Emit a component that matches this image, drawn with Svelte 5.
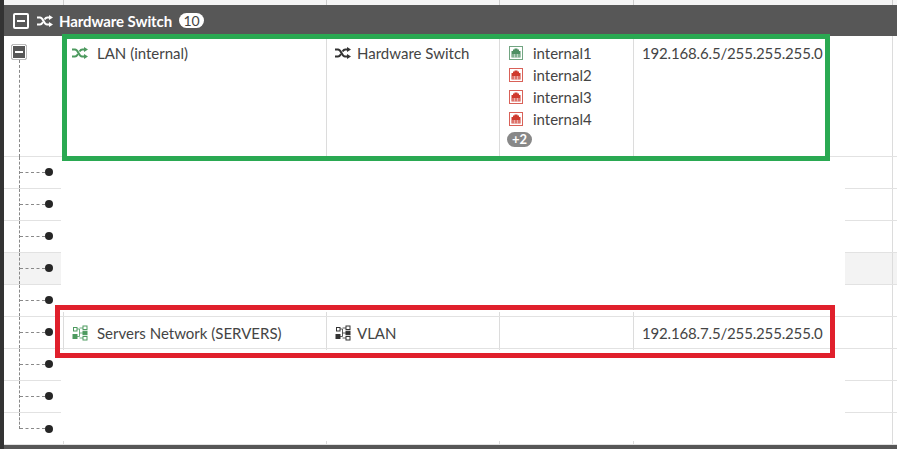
<script>
  // interface table, most rows are blanked out in the screenshot
  const ports = [
    { name: 'internal1', up: true },
    { name: 'internal2', up: false },
    { name: 'internal3', up: false },
    { name: 'internal4', up: false }
  ];
  const childRows = [
    { id: 1 }, { id: 2 }, { id: 3 }, { id: 4, hover: true }, { id: 5 },
    { id: 6, name: 'Servers Network (SERVERS)', type: 'VLAN', ip: '192.168.7.5/255.255.255.0' },
    { id: 7 }, { id: 8 }, { id: 9, last: true }
  ];
</script>

{#snippet shuffle()}
  <svg class="icon" viewBox="0 0 16 12" fill="none" stroke="currentColor" stroke-width="2">
    <path d="M0 2.500h3c3.500 0 3.500 7 7 7h2.500" />
    <path d="M0 9.500h3c1.500 0 2.300-1.200 3-2.500M7.500 4.500c.7-1.100 1.500-2 2.800-2h2.200" />
    <path d="M12 0v5l4-2.500zM12 7v5l4-2.500z" fill="currentColor" stroke="none" />
  </svg>
{/snippet}

{#snippet vlan()}
  <svg class="icon" viewBox="0 0 16 16" fill="none" stroke="currentColor" stroke-width="1">
    <rect x="1.500" y="2.500" width="3.500" height="3.500" />
    <rect x="1" y="9.500" width="4" height="4" fill="currentColor" />
    <rect x="11" y="1" width="4" height="3.500" />
    <rect x="11" y="6.200" width="4" height="3.500" fill="currentColor" />
    <rect x="11" y="11.500" width="4" height="3.500" />
    <path d="M5 4h2.500v7.500H5M7.500 8H11M7.500 3H11M7.500 13H11" stroke-width="0.800" />
  </svg>
{/snippet}

{#snippet port(up)}
  <svg class="port" class:up viewBox="0 0 14 14">
    <rect x="0.500" y="0.500" width="13" height="13" fill="#fff" stroke="currentColor" stroke-opacity="0.800" />
    <path d="M2.500 11.500V5H4V3.500h1.500V2.500h3v1H10V5h1.500v6.500z" fill="currentColor" />
    <path d="M4 8v3.500M5.500 8v3.500M7 8v3.500M8.500 8v3.500M10 8v3.500" stroke="#fff" stroke-width="0.600" />
  </svg>
{/snippet}

<div class="page">
  <div class="top-strip">
    <span></span><span></span><span></span><span></span><span></span><span></span>
  </div>

  <div class="group-head">
    <span class="toggle"></span>
    <span class="head-icon">{@render shuffle()}</span>
    <span class="group-name">Hardware Switch</span>
    <span class="count">10</span>
  </div>

  <div class="row first">
    <div class="tree root"><span class="toggle small"></span></div>
    <div class="cell name lead"><span class="green">{@render shuffle()}</span>LAN (internal)</div>
    <div class="cell name"><span class="dark">{@render shuffle()}</span>Hardware Switch</div>
    <div class="cell ports">
      {#each ports as p}
        <div class="port-line">{@render port(p.up)}{p.name}</div>
      {/each}
      <span class="more">+2</span>
    </div>
    <div class="cell ip">192.168.6.5/255.255.255.0</div>
    <div class="rest"></div>
  </div>

  {#each childRows as r (r.id)}
    <div class="row child" class:hover={r.hover}>
      <div class="tree" class:last={r.last}>
        <div class="branch"><i></i><b></b></div>
      </div>
      <div class="cell name lead">
        {#if r.name}<span class="green">{@render vlan()}</span>{r.name}{/if}
      </div>
      <div class="cell name">
        {#if r.type}<span class="dark">{@render vlan()}</span>{r.type}{/if}
      </div>
      <div class="cell"></div>
      <div class="cell ip">{r.ip ?? ''}</div>
      <div class="rest"></div>
    </div>
  {/each}

  <div class="foot"></div>

  <!-- annotations and blanked areas drawn over the table -->
  <div class="blank upper"></div>
  <div class="blank lower"></div>
  <div class="mark green-box"></div>
  <div class="mark red-box"></div>
</div>

<style>
  :global(body) {
    margin: 0;
    background: #fff;
  }

  .page {
    position: relative;
    width: 897px;
    height: 449px;
    overflow: hidden;
    box-sizing: border-box;
    border-left: 4px solid #333;
    font-family: Lato, "Open Sans", sans-serif;
    font-size: 15px;
    color: #444;
  }

  .top-strip {
    height: 5px;
    background: #f4f4f4;
    display: grid;
    grid-template-columns: 60px 263px 173px 134px 259px 1fr;
  }
  .top-strip span {
    border-right: 1px solid #ccc;
  }
  .top-strip span:last-child {
    border: 0;
  }

  .group-head {
    height: 31px;
    background: #575757;
    color: #fff;
    display: flex;
    align-items: center;
    padding-left: 9px;
    box-sizing: border-box;
  }
  .toggle {
    width: 16px;
    height: 16px;
    box-sizing: border-box;
    border: 2px solid #fff;
    border-radius: 2px;
    background: #575757;
    display: flex;
    align-items: center;
    justify-content: center;
  }
  .toggle::before {
    content: "";
    width: 8px;
    height: 2px;
    background: #fff;
  }
  .toggle.small {
    border: 1px solid #bbb;
    box-shadow: inset 0 0 0 1px #fff;
  }
  .head-icon {
    margin-left: 8px;
    margin-right: 6px;
    display: flex;
  }
  .group-name {
    font-weight: 700;
    letter-spacing: -0.1px;
  }
  .count {
    margin-left: 7px;
    width: 25px;
    height: 15px;
    line-height: 15px;
    border-radius: 8px;
    background: #fff;
    color: #444;
    font-size: 14px;
    text-align: center;
  }

  .row {
    display: grid;
    grid-template-columns: 60px 263px 173px 134px 259px 1fr;
    box-sizing: border-box;
    border-bottom: 1px solid #e2e2e2;
  }
  .row.first {
    height: 121px;
  }
  .row.child {
    height: 32px;
  }
  .row.hover {
    background: #f3f3f3;
  }

  .cell,
  .tree {
    border-right: 1px solid #dcdcdc;
    box-sizing: border-box;
    min-width: 0;
  }
  .cell {
    padding: 7px 0 0 8px;
    line-height: 20px;
    white-space: nowrap;
  }
  .ip {
    letter-spacing: -0.16px;
  }
  .name {
    display: flex;
    align-items: flex-start;
    gap: 6px;
  }
  .name.lead {
    gap: 9px;
  }
  .child .cell {
    padding-top: 6px;
  }
  .green,
  .dark {
    display: flex;
    margin-top: 4px;
  }
  .child .green,
  .child .dark {
    margin-top: 2px;
  }
  .green {
    color: #4d9a5f;
  }
  .dark {
    color: #333;
  }
  .icon {
    width: 16px;
    height: 12px;
    display: block;
  }
  .child .icon {
    height: 16px;
  }

  .ports {
    padding-left: 9px;
    padding-top: 6px;
  }
  .port-line {
    display: flex;
    align-items: center;
    gap: 10px;
    height: 22px;
  }
  .port {
    width: 14px;
    height: 14px;
    color: #cf3a2e;
  }
  .port.up {
    color: #4f8f63;
  }
  .more {
    display: block;
    width: 25px;
    height: 15px;
    line-height: 15px;
    margin: 2px 0 0 -2px;
    border-radius: 8px;
    background: #888;
    color: #fff;
    font-size: 13px;
    font-weight: 700;
    text-align: center;
  }

  .tree {
    padding-left: 15px;
  }
  .tree.root {
    padding: 8px 0 0 7px;
    position: relative;
  }
  .tree.root::after {
    content: "";
    position: absolute;
    left: 15px;
    top: 24px;
    bottom: -1px;
    border-left: 1px dashed #888;
  }
  .branch {
    height: 100%;
    display: flex;
    align-items: center;
    border-left: 1px dashed #888;
    box-sizing: border-box;
  }
  .tree.last .branch {
    height: 16px;
    align-items: flex-end;
  }
  .branch i {
    width: 25px;
    border-top: 1px dashed #888;
  }
  .branch b {
    width: 8px;
    height: 8px;
    border-radius: 50%;
    background: #262626;
    margin-bottom: 1px;
  }
  .tree.last .branch b {
    margin-bottom: -4px;
  }

  .foot {
    height: 8px;
    background: #575757;
  }

  .blank {
    position: absolute;
    left: 57px;
    width: 784px;
    background: #fff;
  }
  .blank.upper {
    top: 158px;
    height: 154px;
  }
  .blank.lower {
    top: 350px;
    height: 91px;
  }

  .mark {
    position: absolute;
    box-sizing: border-box;
    border-width: 5px;
    border-style: solid;
  }
  .green-box {
    left: 58px;
    top: 34px;
    width: 768px;
    height: 127px;
    border-color: #2aa952;
  }
  .red-box {
    left: 51px;
    top: 305px;
    width: 780px;
    height: 53px;
    border-color: #e0202c;
  }
</style>
